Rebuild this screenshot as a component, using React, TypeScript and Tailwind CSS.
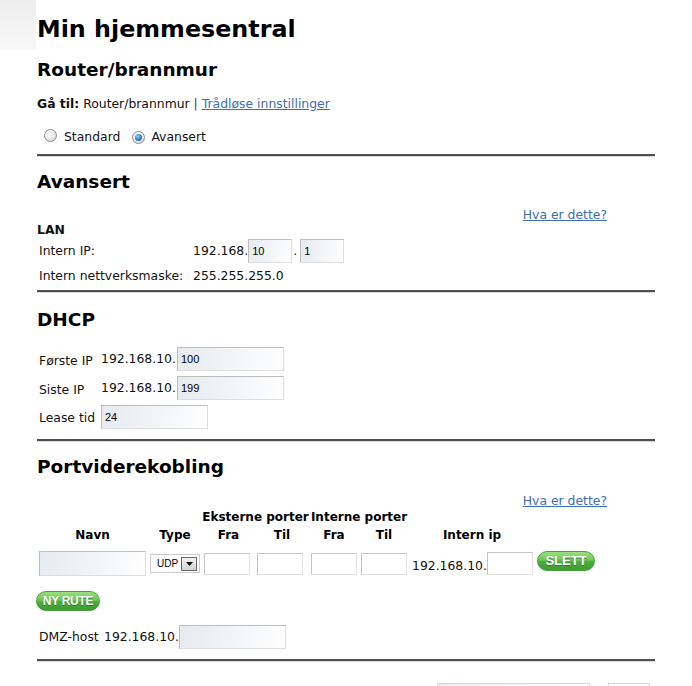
import React from "react";

function Radio({ checked }: { checked?: boolean }) {
  return (
    <span className="relative inline-flex h-[13px] w-[13px] shrink-0 items-center justify-center rounded-full border border-[#8d8d8d] bg-[radial-gradient(circle_at_35%_30%,#ffffff_0%,#f2f2f2_35%,#cfcfcf_100%)]">
      {checked ? (
        <span className="h-[7px] w-[7px] rounded-full bg-[radial-gradient(circle_at_40%_35%,#9fd0ff_0%,#3f86d0_45%,#164f8c_100%)]" />
      ) : null}
    </span>
  );
}

function Hr({ className }: { className: string }) {
  return <div className={className} />;
}

const gradInput =
  "border border-t-[#bdbdbd] border-l-[#bdbdbd] border-r-[#dedede] border-b-[#dedede] bg-[linear-gradient(100deg,#e7ebef_0%,#f3f5f7_55%,#ffffff_100%)] pl-[3px] font-['Liberation_Sans',Arial,sans-serif] text-[11px] text-black outline-none";

const whiteInput =
  "border border-t-[#c4c4c4] border-l-[#c4c4c4] border-r-[#e0e0e0] border-b-[#e0e0e0] bg-white pl-[3px] font-['Liberation_Sans',Arial,sans-serif] text-[11px] text-black outline-none";

export default function App() {
  return (
    <div className="min-h-[686px] w-[692px] overflow-hidden bg-white bg-[linear-gradient(to_bottom,#ededed,#f8f8f8)] bg-[length:36px_50px] bg-no-repeat font-['DejaVu_Sans',Verdana,sans-serif] text-[12.4px] leading-[16px] text-[#111]">
      <div className="ml-[37px] w-[618px] pt-[15px]">
        <h1 className="text-[23.8px] font-bold leading-[28px] text-black">Min hjemmesentral</h1>
        <h2 className="mt-[15px] text-[18.5px] font-bold leading-[24px] text-black">Router/brannmur</h2>
        <p className="mt-[14px]">
          <b>Gå til:</b> Router/brannmur <span className="text-[#6b2860]">|</span>{" "}
          <a href="#" className="text-[#3d6db3] underline">
            Trådløse innstillinger
          </a>
        </p>
        <div className="mt-[17px] flex h-[16px] items-center">
          <span className="ml-[7px]">
            <Radio />
          </span>
          <span className="ml-[7px]">Standard</span>
          <span className="ml-[12px]">
            <Radio checked />
          </span>
          <span className="ml-[6px]">Avansert</span>
        </div>

        <Hr className="mt-[9px] h-[2px] bg-[#4f4f4f] shadow-[0_1px_0_#d9d9d9]" />

        <h2 className="mt-[14px] text-[18.5px] font-bold leading-[24px] text-black">Avansert</h2>
        <div className="mt-[14px] flex w-[570px] justify-end leading-[14px]">
          <a href="#" className="text-[#3d6db3] underline">
            Hva er dette?
          </a>
        </div>
        <div className="font-bold">LAN</div>
        <div className="mt-[1px] grid grid-cols-[154px_auto] gap-y-[5px]">
          <div className="flex h-[24px] items-center pl-[2px]">Intern IP:</div>
          <div className="flex h-[24px] items-center pl-[2px]">
            <span>192.168.</span>
            <input readOnly defaultValue="10" className={"h-[24px] w-[44px] " + gradInput} />
            <span className="ml-[1px] mr-[3px]">.</span>
            <input readOnly defaultValue="1" className={"h-[24px] w-[44px] " + gradInput} />
          </div>
          <div className="pl-[2px]">Intern nettverksmaske:</div>
          <div className="pl-[2px]">255.255.255.0</div>
        </div>

        <Hr className="mt-[6px] h-[2px] bg-[#4f4f4f] shadow-[0_1px_0_#d9d9d9]" />

        <h2 className="mt-[16px] text-[18.5px] font-bold leading-[24px] text-black">DHCP</h2>
        <div className="mt-[15px] grid grid-cols-[62px_auto] gap-y-[5px]">
          <div className="flex h-[24px] items-center pl-[2px] pt-[3px]">Første IP</div>
          <div className="flex h-[24px] items-center pl-[2px]">
            <span>192.168.10.</span>
            <input readOnly defaultValue="100" className={"ml-[1px] h-[24px] w-[107px] " + gradInput} />
          </div>
          <div className="flex h-[24px] items-center pl-[2px] pt-[3px]">Siste IP</div>
          <div className="flex h-[24px] items-center pl-[2px]">
            <span>192.168.10.</span>
            <input readOnly defaultValue="199" className={"ml-[1px] h-[24px] w-[107px] " + gradInput} />
          </div>
          <div className="flex h-[24px] items-center pl-[2px] pt-[2px]">Lease tid</div>
          <div className="flex h-[24px] items-center pl-[2px]">
            <input readOnly defaultValue="24" className={"h-[24px] w-[107px] " + gradInput} />
          </div>
        </div>

        <Hr className="mt-[10px] h-[2px] bg-[#4f4f4f] shadow-[0_1px_0_#d9d9d9]" />

        <h2 className="mt-[14px] text-[18.5px] font-bold leading-[24px] text-black">Portviderekobling</h2>
        <div className="mt-[15px] flex w-[570px] justify-end leading-[14px]">
          <a href="#" className="text-[#3d6db3] underline">
            Hva er dette?
          </a>
        </div>

        <div className="grid grid-cols-[111px_54px_53px_54px_50px_50px_126px_62px] text-[12px] font-bold leading-[18px] text-black">
          <div className="col-span-2" />
          <div className="col-span-2 flex justify-center whitespace-nowrap">Eksterne porter</div>
          <div className="col-span-2 flex justify-center whitespace-nowrap">Interne porter</div>
          <div className="col-span-2" />
          <div className="flex justify-center">Navn</div>
          <div className="flex justify-center">Type</div>
          <div className="flex justify-center">Fra</div>
          <div className="flex justify-center">Til</div>
          <div className="flex justify-center">Fra</div>
          <div className="flex justify-center">Til</div>
          <div className="flex justify-center">Intern ip</div>
          <div />
        </div>

        <div className="mt-[7px] grid h-[25px] grid-cols-[111px_54px_53px_54px_50px_50px_126px_62px] items-center">
          <div className="pl-[2px]">
            <input readOnly defaultValue="" className={"block h-[25px] w-[107px] " + gradInput} />
          </div>
          <div className="pl-[2px]">
            <div className="flex h-[19px] w-[50px] items-center border border-[#cbcbcb] bg-white pl-[6px] pr-[2px] font-['Liberation_Sans',Arial,sans-serif] text-[10px] text-black">
              <span>UDP</span>
              <span className="ml-auto flex h-[14px] w-[16px] items-center justify-center border border-[#6a6a6a] bg-[linear-gradient(to_bottom,#f4f4f4,#d2d2d2)]">
                <svg width="7" height="4" viewBox="0 0 7 4">
                  <path d="M0 0 L7 0 L3.5 4 Z" fill="#111" />
                </svg>
              </span>
            </div>
          </div>
          <div className="pl-[2px]">
            <input readOnly defaultValue="" className={"block h-[22px] w-[46px] " + whiteInput} />
          </div>
          <div className="pl-[2px]">
            <input readOnly defaultValue="" className={"block h-[22px] w-[46px] " + whiteInput} />
          </div>
          <div className="pl-[2px]">
            <input readOnly defaultValue="" className={"block h-[22px] w-[46px] " + whiteInput} />
          </div>
          <div className="pl-[2px]">
            <input readOnly defaultValue="" className={"block h-[22px] w-[46px] " + whiteInput} />
          </div>
          <div className="flex items-center pl-[3px]">
            <span className="pt-[4px]">192.168.10.</span>
            <input readOnly defaultValue="" className={"block h-[23px] w-[46px] " + whiteInput} />
          </div>
          <div className="self-start pl-[2px]">
            <button className="flex h-[20px] w-[58px] items-center justify-center rounded-full border border-[#48a03c] bg-[linear-gradient(to_bottom,#9be07f_0%,#6cc656_45%,#4aaa3c_55%,#3f9d34_100%)] font-['Liberation_Sans',Arial,sans-serif] text-[13px] font-bold text-white [text-shadow:0_1px_0_#2f7a27]">
              SLETT
            </button>
          </div>
        </div>

        <button className="-ml-[1px] mt-[15px] flex h-[20px] w-[64px] items-center justify-center rounded-full border border-[#48a03c] bg-[linear-gradient(to_bottom,#9be07f_0%,#6cc656_45%,#4aaa3c_55%,#3f9d34_100%)] font-['Liberation_Sans',Arial,sans-serif] text-[12px] font-bold tracking-[-0.3px] text-white [text-shadow:0_1px_0_#2f7a27]">
          NY RUTE
        </button>

        <div className="mt-[14px] grid h-[24px] grid-cols-[65px_auto] items-center">
          <div className="pl-[2px]">DMZ-host</div>
          <div className="flex items-center pl-[2px]">
            <span>192.168.10.</span>
            <input readOnly defaultValue="" className={"h-[24px] w-[107px] " + gradInput} />
          </div>
        </div>

        <Hr className="mt-[10px] h-[2px] bg-[#4f4f4f] shadow-[0_1px_0_#d9d9d9]" />

        <div className="mt-[22px] flex">
          <div className="ml-[400px] h-[24px] w-[153px] border border-[#d8d8d8] bg-[linear-gradient(100deg,#eceff2,#ffffff)]" />
          <div className="ml-[18px] h-[24px] w-[42px] border border-[#d8d8d8] bg-white" />
        </div>
      </div>
    </div>
  );
}
